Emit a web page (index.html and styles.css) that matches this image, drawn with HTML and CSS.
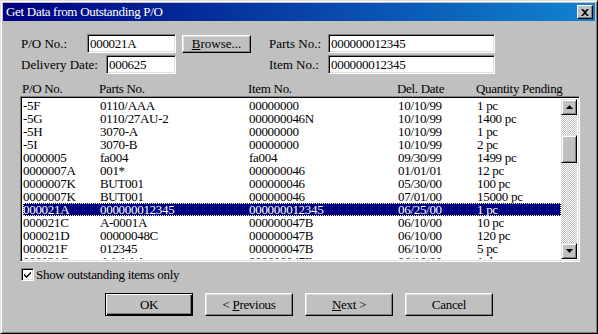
FILE: index.html
```html
<!DOCTYPE html>
<html>
<head>
<meta charset="utf-8">
<link rel="stylesheet" href="styles.css">
</head>
<body>
<div class="dialog">
  <div class="titlebar">
    <span class="title">Get Data from Outstanding P/O</span>
    <span class="close"><svg width="8" height="7" viewBox="0 0 8 7"><path d="M0 0h2l2 2 2-2h2L5 3.5 8 7H6L4 5 2 7H0l3-3.5z" fill="#000"/></svg></span>
  </div>
  <div class="content">
    <div class="formrow">
      <label class="lbl w67">P/O No.:</label>
      <div class="field w89">000021A</div>
      <button class="btn browse"><u>B</u>rowse...</button>
      <label class="lbl w60 ml17">Parts No.:</label>
      <div class="field w167">000000012345</div>
    </div>
    <div class="formrow">
      <label class="lbl w86">Delivery Date:</label>
      <div class="field w70">000625</div>
      <label class="lbl w60 ml92">Item No.:</label>
      <div class="field w167">000000012345</div>
    </div>
    <div class="cols headers">
      <span>P/O No.</span><span>Parts No.</span><span>Item No.</span><span>Del. Date</span><span>Quantity Pending</span>
    </div>
    <div class="listbox">
      <div class="rows">
        <div class="cols row"><span>-5F</span><span>0110/AAA</span><span>00000000</span><span>10/10/99</span><span>1 pc</span></div>
        <div class="cols row"><span>-5G</span><span>0110/27AU-2</span><span>000000046N</span><span>10/10/99</span><span>1400 pc</span></div>
        <div class="cols row"><span>-5H</span><span>3070-A</span><span>00000000</span><span>10/10/99</span><span>1 pc</span></div>
        <div class="cols row"><span>-5I</span><span>3070-B</span><span>00000000</span><span>10/10/99</span><span>2 pc</span></div>
        <div class="cols row"><span>0000005</span><span>fa004</span><span>fa004</span><span>09/30/99</span><span>1499 pc</span></div>
        <div class="cols row"><span>0000007A</span><span>001*</span><span>000000046</span><span>01/01/01</span><span>12 pc</span></div>
        <div class="cols row"><span>0000007K</span><span>BUT001</span><span>000000046</span><span>05/30/00</span><span>100 pc</span></div>
        <div class="cols row"><span>0000007K</span><span>BUT001</span><span>000000046</span><span>07/01/00</span><span>15000 pc</span></div>
        <div class="cols row selected"><span>000021A</span><span>000000012345</span><span>000000012345</span><span>06/25/00</span><span>1 pc</span></div>
        <div class="cols row"><span>000021C</span><span>A-0001A</span><span>000000047B</span><span>06/10/00</span><span>10 pc</span></div>
        <div class="cols row"><span>000021D</span><span>00000048C</span><span>000000047B</span><span>06/10/00</span><span>120 pc</span></div>
        <div class="cols row"><span>000021F</span><span>012345</span><span>000000047B</span><span>06/10/00</span><span>5 pc</span></div>
        <div class="cols row"><span>000021G</span><span>AAAAA</span><span>000000047B</span><span>06/10/00</span><span>1 doz</span></div>
      </div>
      <div class="scrollbar">
        <div class="sbtn"><svg width="7" height="4" viewBox="0 0 7 4"><path d="M3.5 0L7 4H0z" fill="#000"/></svg></div>
        <div class="track">
          <div class="trackpad top"></div>
          <div class="thumb"></div>
          <div class="trackpad bottom"></div>
        </div>
        <div class="sbtn"><svg width="7" height="4" viewBox="0 0 7 4"><path d="M0 0h7L3.5 4z" fill="#000"/></svg></div>
      </div>
    </div>
    <div class="check">
      <span class="box"><svg width="9" height="9" viewBox="0 0 9 9"><path d="M1 3.5l2.5 2.5L8 1.5v2L3.5 8 1 5.5z" fill="#000"/></svg></span>
      <span>Show outstanding items only</span>
    </div>
    <div class="buttons">
      <button class="btn big default">OK</button>
      <button class="btn big">&lt; <u>P</u>revious</button>
      <button class="btn big"><u>N</u>ext &gt;</button>
      <button class="btn big">Cancel</button>
    </div>
  </div>
</div>
</body>
</html>
```
FILE: styles.css
```css
html, body {
  margin: 0;
  padding: 0;
  background: #c0c0c0;
}
body {
  font-family: "Liberation Serif", "Times New Roman", serif;
  font-size: 13px;
  color: #000;
}
.dialog {
  width: 598px;
  height: 334px;
  box-sizing: border-box;
  border-top: 1px solid #dfdfdf;
  border-left: 1px solid #dfdfdf;
  border-right: 1px solid #000;
  border-bottom: 1px solid #000;
  box-shadow: inset 1px 1px 0 #fff, inset -1px -1px 0 #808080;
  padding: 2px;
  display: flex;
  flex-direction: column;
  background: #c0c0c0;
}
.titlebar {
  height: 18px;
  background: linear-gradient(to right, #000080, #1084d0);
  display: flex;
  align-items: center;
  justify-content: space-between;
  padding: 0 2px 0 3px;
}
.title {
  color: #fff;
  font-size: 13px;
  letter-spacing: -0.3px;
}
.close {
  width: 16px;
  height: 14px;
  box-sizing: border-box;
  background: #c0c0c0;
  border-top: 1px solid #fff;
  border-left: 1px solid #fff;
  border-right: 1px solid #000;
  border-bottom: 1px solid #000;
  box-shadow: inset -1px -1px 0 #808080;
  display: flex;
  align-items: center;
  justify-content: center;
}
.content {
  padding: 13px 0 0 17px;
  display: flex;
  flex-direction: column;
}
.formrow {
  display: flex;
  align-items: center;
  height: 19px;
  margin-bottom: 2px;
}
.lbl { flex: none; padding-left: 1px; box-sizing: border-box; }
.w67 { width: 67px; }
.w86 { width: 86px; }
.w60 { width: 60px; }
.ml17 { margin-left: 17px; }
.ml92 { margin-left: 92px; }
.field {
  flex: none;
  height: 19px;
  box-sizing: border-box;
  background: #fff;
  border-top: 1px solid #808080;
  border-left: 1px solid #808080;
  border-right: 1px solid #fff;
  border-bottom: 1px solid #fff;
  box-shadow: inset 1px 1px 0 #000, inset -1px -1px 0 #dfdfdf;
  padding: 1px 0 0 2px;
  line-height: 16px;
  letter-spacing: -0.3px;
}
.w89 { width: 89px; }
.w70 { width: 70px; }
.w167 { width: 167px; }
.btn {
  font-family: inherit;
  font-size: 13px;
  color: #000;
  background: #c0c0c0;
  box-sizing: border-box;
  border-top: 1px solid #fff;
  border-left: 1px solid #fff;
  border-right: 1px solid #000;
  border-bottom: 1px solid #000;
  box-shadow: inset -1px -1px 0 #808080, inset 1px 1px 0 #dfdfdf;
  padding: 0;
  margin: 0;
}
.browse {
  width: 69px;
  height: 18px;
  margin-left: 6px;
  line-height: 14px;
}
.cols {
  display: grid;
  grid-template-columns: 77px 149px 149px 79px 1fr;
  white-space: nowrap;
  letter-spacing: -0.3px;
}
.headers {
  margin-top: 6px;
  padding-left: 2px;
  height: 14px;
  line-height: 14px;
}
.listbox {
  width: 560px;
  height: 166px;
  box-sizing: border-box;
  border-top: 1px solid #808080;
  border-left: 1px solid #808080;
  border-right: 1px solid #fff;
  border-bottom: 1px solid #fff;
  box-shadow: inset 1px 1px 0 #000, inset -1px -1px 0 #dfdfdf;
  padding: 2px;
  display: flex;
  background: #fff;
}
.rows {
  flex: 1;
  overflow: hidden;
}
.row {
  height: 13px;
  line-height: 13px;
}
.selected {
  background: #000080;
  color: #fff;
  outline: 1px dotted #ffff80;
  outline-offset: -1px;
}
.scrollbar {
  width: 16px;
  flex: none;
  display: flex;
  flex-direction: column;
}
.sbtn, .thumb {
  width: 16px;
  height: 16px;
  box-sizing: border-box;
  background: #c0c0c0;
  border-top: 1px solid #dfdfdf;
  border-left: 1px solid #dfdfdf;
  border-right: 1px solid #000;
  border-bottom: 1px solid #000;
  box-shadow: inset 1px 1px 0 #fff, inset -1px -1px 0 #808080;
  display: flex;
  align-items: center;
  justify-content: center;
  flex: none;
}
.track {
  flex: 1;
  display: flex;
  flex-direction: column;
  background: repeating-conic-gradient(#c0c0c0 0 25%, #fff 0 50%) 0 0 / 2px 2px;
}
.trackpad.top { height: 20px; }
.thumb { height: 28px; }
.trackpad.bottom { flex: 1; }
.check {
  display: flex;
  align-items: center;
  margin-top: 6px;
  margin-left: 1px;
  height: 13px;
  gap: 2px;
  letter-spacing: -0.3px;
}
.box {
  flex: none;
  width: 13px;
  height: 13px;
  box-sizing: border-box;
  background: #fff;
  border-top: 1px solid #808080;
  border-left: 1px solid #808080;
  border-right: 1px solid #fff;
  border-bottom: 1px solid #fff;
  box-shadow: inset 1px 1px 0 #000, inset -1px -1px 0 #dfdfdf;
  display: flex;
  align-items: center;
  justify-content: center;
}
.buttons {
  display: flex;
  gap: 12px;
  margin-top: 12px;
  margin-left: 85px;
}
.big {
  width: 88px;
  height: 23px;
  letter-spacing: -0.3px;
}
.default {
  border: 1px solid #000;
  box-shadow: inset 1px 1px 0 #fff, inset -1px -1px 0 #000, inset -2px -2px 0 #808080;
}
```
